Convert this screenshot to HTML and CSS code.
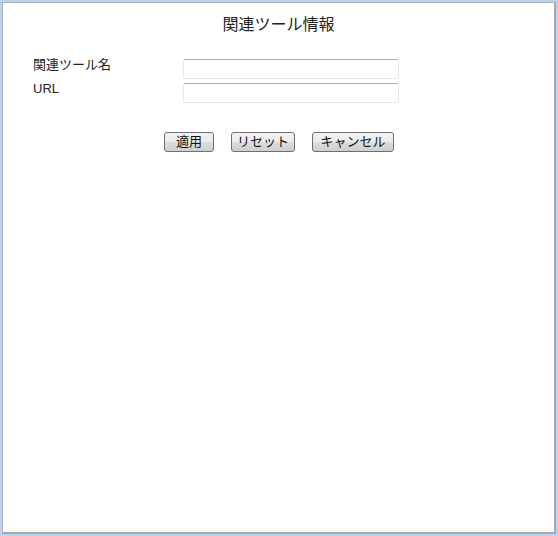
FILE: index.html
```html
<!DOCTYPE html>
<html lang="ja">

<head>
  <meta charset="UTF-8">
  <title>関連ツール情報</title>
  <link rel="stylesheet" href="styles.css">
</head>

<body>
  <div class="window">
    <div class="panel">
      <h1 class="page-title">関連ツール情報</h1>

      <div class="form-rows">
        <div class="form-row">
          <label class="field-label" for="tool-name">関連ツール名</label>
          <input class="field-input" id="tool-name" type="text">
        </div>
        <div class="form-row">
          <label class="field-label" for="tool-url">URL</label>
          <input class="field-input" id="tool-url" type="text">
        </div>
      </div>

      <div class="button-row">
        <button class="btn btn-apply" type="button">適用</button>
        <button class="btn btn-reset" type="button">リセット</button>
        <button class="btn btn-cancel" type="button">キャンセル</button>
      </div>
    </div>
  </div>
</body>

</html>
```

FILE: styles.css
```css
* {
  margin: 0;
  padding: 0;
  box-sizing: border-box;
}

body {
  font-family: "Liberation Sans", "Noto Sans CJK JP", sans-serif;
  background-color: #fff;
  color: #000;
}

.window {
  width: 558px;
  height: 536px;
  border: 2px solid #bcd3ec;
  background-color: #bcd3ec;
}

.panel {
  height: 100%;
  background-color: #fff;
  border-top: 1px solid #a8b3c0;
  border-left: 1px solid #a8b3c0;
  border-right: 2px solid #a9a9a9;
  border-bottom: 2px solid #a9a9a9;
}

.page-title {
  font-size: 16px;
  font-weight: 400;
  text-align: center;
  color: #222;
  padding-top: 12px;
  line-height: 20px;
}

.form-rows {
  display: flex;
  flex-direction: column;
  gap: 4px;
  margin-top: 24px;
  padding-left: 30px;
}

.form-row {
  display: flex;
  align-items: flex-start;
  height: 20px;
}

.field-label {
  width: 150px;
  font-size: 13px;
  line-height: 12px;
  color: #222;
}

.field-input {
  width: 216px;
  height: 20px;
  border: 1px solid #e2e8ef;
  border-top-color: #abadb3;
  border-radius: 2px;
  background-color: #fff;
  font-size: 13px;
  outline: none;
}

.button-row {
  display: flex;
  gap: 17px;
  margin-top: 29px;
  padding-left: 161px;
}

.btn {
  height: 20px;
  border: 1px solid #707070;
  border-radius: 3px;
  background: linear-gradient(to bottom, #f2f2f2 0%, #ebebeb 50%, #dddddd 51%, #cfcfcf 100%);
  font-family: "Liberation Sans", "Noto Sans CJK JP", sans-serif;
  font-size: 13px;
  font-weight: 400;
  line-height: 16px;
  color: #111;
}

.btn-apply {
  width: 50px;
}

.btn-reset {
  width: 64px;
}

.btn-cancel {
  width: 82px;
}
```
